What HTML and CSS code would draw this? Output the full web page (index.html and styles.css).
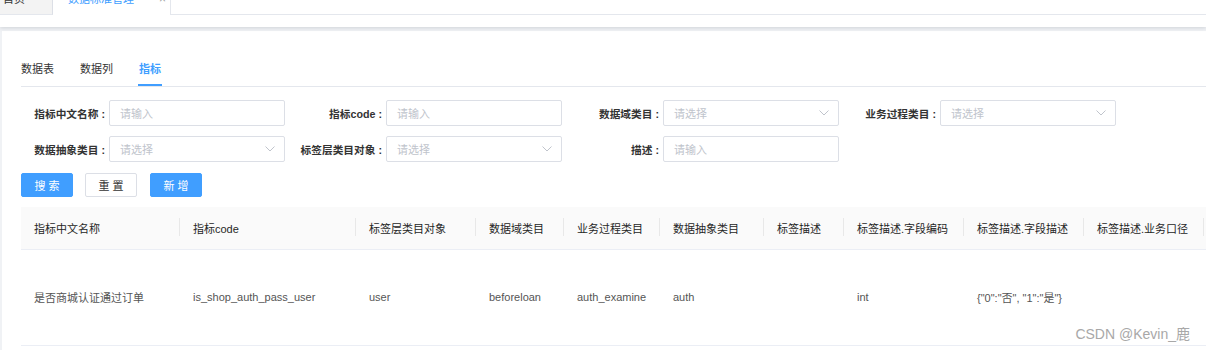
FILE: index.html
```html
<!DOCTYPE html>
<html lang="zh">
<head>
<meta charset="utf-8">
<title>数据标准管理</title>
<link rel="stylesheet" href="styles.css">
</head>
<body>
<div class="topbar">
  <div class="tags">
    <div class="tag home">首页</div>
    <div class="tag active">数据标准管理<span class="close">×</span></div>
    <div class="tag-rest"></div>
  </div>
</div>
<div class="main">
  <div class="panel">
    <div class="subtabs">
      <div class="subtab">数据表</div>
      <div class="subtab">数据列</div>
      <div class="subtab on">指标</div>
    </div>

    <div class="form">
      <div class="field"><label>指标中文名称<span class="colon">:</span></label><div class="input"><span class="ph">请输入</span></div></div>
      <div class="field"><label>指标code<span class="colon">:</span></label><div class="input"><span class="ph">请输入</span></div></div>
      <div class="field"><label>数据域类目<span class="colon">:</span></label><div class="input select"><span class="ph">请选择</span><svg class="arrow" width="10" height="6" viewBox="0 0 10 6"><polyline points="0.5,0.5 5,5 9.5,0.5" fill="none" stroke="#c0c4cc" stroke-width="1"/></svg></div></div>
      <div class="field"><label>业务过程类目<span class="colon">:</span></label><div class="input select"><span class="ph">请选择</span><svg class="arrow" width="10" height="6" viewBox="0 0 10 6"><polyline points="0.5,0.5 5,5 9.5,0.5" fill="none" stroke="#c0c4cc" stroke-width="1"/></svg></div></div>
      <div class="field"><label>数据抽象类目<span class="colon">:</span></label><div class="input select"><span class="ph">请选择</span><svg class="arrow" width="10" height="6" viewBox="0 0 10 6"><polyline points="0.5,0.5 5,5 9.5,0.5" fill="none" stroke="#c0c4cc" stroke-width="1"/></svg></div></div>
      <div class="field"><label>标签层类目对象<span class="colon">:</span></label><div class="input select"><span class="ph">请选择</span><svg class="arrow" width="10" height="6" viewBox="0 0 10 6"><polyline points="0.5,0.5 5,5 9.5,0.5" fill="none" stroke="#c0c4cc" stroke-width="1"/></svg></div></div>
      <div class="field"><label>描述<span class="colon">:</span></label><div class="input"><span class="ph">请输入</span></div></div>
    </div>

    <div class="buttons">
      <button class="btn primary">搜 索</button>
      <button class="btn">重 置</button>
      <button class="btn primary">新 增</button>
    </div>

    <table class="grid">
      <colgroup>
        <col class="w159"><col class="w176"><col class="w120"><col class="w88"><col class="w96"><col class="w104"><col class="w80"><col class="w120"><col class="w120"><col class="w120"><col class="w120">
      </colgroup>
      <thead>
        <tr>
          <th>指标中文名称</th>
          <th>指标code</th>
          <th>标签层类目对象</th>
          <th>数据域类目</th>
          <th>业务过程类目</th>
          <th>数据抽象类目</th>
          <th>标签描述</th>
          <th>标签描述.字段编码</th>
          <th>标签描述.字段描述</th>
          <th>标签描述.业务口径</th>
          <th></th>
        </tr>
      </thead>
      <tbody>
        <tr>
          <td>是否商城认证通过订单</td>
          <td>is_shop_auth_pass_user</td>
          <td>user</td>
          <td>beforeloan</td>
          <td>auth_examine</td>
          <td>auth</td>
          <td></td>
          <td>int</td>
          <td>{"0":"否", "1":"是"}</td>
          <td></td>
          <td></td>
        </tr>
      </tbody>
    </table>

    <div class="watermark">CSDN @Kevin_鹿</div>
  </div>
</div>
</body>
</html>
```

FILE: styles.css
```css
* { box-sizing: border-box; }

html, body {
  margin: 0;
  width: 1206px;
  height: 350px;
  overflow: hidden;
}

body {
  background: #f0f2f5;
  font-family: "Liberation Sans", "Noto Sans CJK SC", sans-serif;
  font-size: 11px;
  color: #333;
}

/* top tag bar */
.topbar {
  height: 27px;
  background: #fff;
  overflow: hidden;
  position: relative;
  z-index: 1;
  box-shadow: 0 1px 4px rgba(0, 21, 41, 0.14);
}

.tags {
  display: flex;
  height: 31px;
  margin-top: -16px;
}

.tag {
  height: 31px;
  line-height: 30px;
  font-size: 11px;
  white-space: nowrap;
}

.tag.home {
  width: 53px;
  padding-left: 3px;
  background: #f3f3f3;
  color: #333;
  border-right: 1px solid #dcdfe6;
  border-bottom: 1px solid #e4e7ed;
}

.tag.active {
  width: 118px;
  padding-left: 15px;
  background: #fff;
  color: #409eff;
  border-right: 1px solid #e4e7ed;
  display: flex;
}

.tag .close {
  margin-left: 25px;
  color: #999;
  font-size: 12px;
}

.tag-rest {
  flex: 1;
  border-bottom: 1px solid #e4e7ed;
}

/* main panel */
.main {
  padding: 4px 0 0 2px;
}

.panel {
  position: relative;
  height: 319px;
  background: #fff;
  padding-left: 19px;
  overflow: hidden;
}

.subtabs {
  display: flex;
  gap: 26px;
  margin-top: 24px;
  border-bottom: 1px solid #e4e7ed;
}

.subtab {
  height: 31px;
  line-height: 29px;
  font-size: 11px;
  color: #333;
  border-bottom: 2px solid transparent;
}

.subtab.on {
  color: #409eff;
  font-weight: bold;
  border-bottom-color: #409eff;
  padding: 0 1px;
  margin-left: -1px;
}

/* form */
.form {
  display: grid;
  grid-template-columns: repeat(4, 264px);
  column-gap: 13px;
  row-gap: 10px;
  margin-top: 13px;
}

.field {
  display: flex;
  align-items: center;
}

.field label {
  width: 84px;
  margin-right: 4px;
  text-align: right;
  font-size: 10.7px;
  font-weight: bold;
  color: #333;
  white-space: nowrap;
}

.colon {
  margin-left: 3px;
}

.input {
  width: 176px;
  height: 26px;
  border: 1px solid #dcdfe6;
  border-radius: 2px;
  padding: 0 9px 0 10px;
  display: flex;
  align-items: center;
  justify-content: space-between;
}

.ph {
  color: #c0c4cc;
  font-size: 11px;
}

.arrow {
  display: block;
}

/* buttons */
.buttons {
  display: flex;
  gap: 12px;
  margin-top: 11px;
}

.btn {
  width: 52px;
  height: 24px;
  padding: 0;
  border: 1px solid #dcdfe6;
  border-radius: 2px;
  background: #fff;
  color: #333;
  font-family: inherit;
  font-size: 11px;
}

.btn.primary {
  background: #409eff;
  border-color: #409eff;
  color: #fff;
}

.btn:nth-child(3) { margin-left: 1px; }

/* table */
.grid {
  margin-top: 10px;
  border-collapse: collapse;
  table-layout: fixed;
  width: 1303px;
}

.w159 { width: 159px; }
.w176 { width: 176px; }
.w120 { width: 120px; }
.w88 { width: 88px; }
.w96 { width: 96px; }
.w104 { width: 104px; }
.w80 { width: 80px; }

.grid th {
  position: relative;
  height: 42px;
  padding: 0 13px;
  background: #fafafa;
  border-bottom: 1px solid #ebeef5;
  text-align: left;
  font-weight: normal;
  font-size: 11px;
  color: #262626;
  white-space: nowrap;
}

.grid th::after {
  content: "";
  position: absolute;
  right: 0;
  top: 11px;
  width: 1px;
  height: 18px;
  background: #e8e8e8;
}

.grid td {
  height: 96px;
  padding: 0 13px;
  border-bottom: 1px solid #ebeef5;
  font-size: 11px;
  color: #555;
  white-space: nowrap;
}

.watermark {
  position: absolute;
  right: 16px;
  bottom: 7px;
  font-size: 14px;
  color: #a8a8a8;
}
```
